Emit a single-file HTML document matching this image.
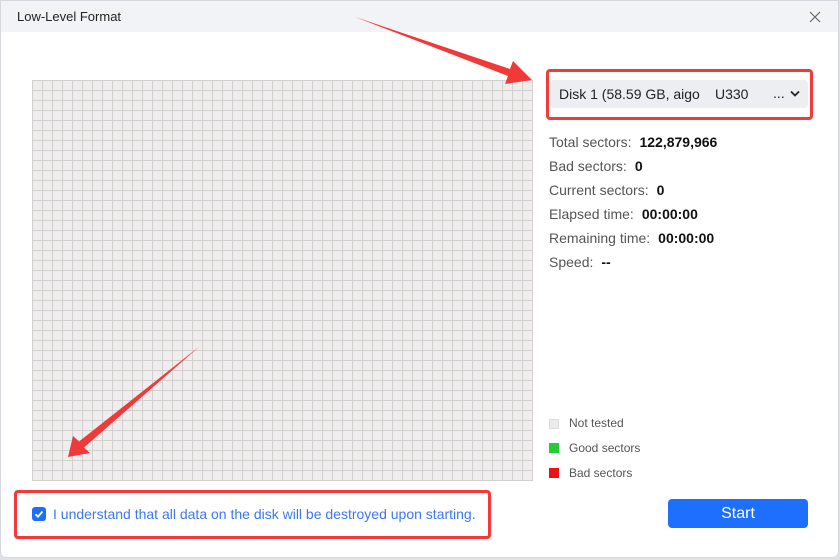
<!DOCTYPE html>
<html><head><meta charset="utf-8"><style>
*{margin:0;padding:0;box-sizing:border-box}
body{width:840px;height:560px;background:#dfe3e8;font-family:"Liberation Sans",sans-serif;position:relative;overflow:hidden}
.win{position:absolute;left:0;top:0;width:839px;height:558px;background:#fff;border-radius:0 0 6px 6px;overflow:hidden;box-shadow:inset 0 0 0 1px #d4d8de}
.title{position:absolute;left:1px;top:1px;width:837px;height:31px;background:#f1f3f6;}
.title span{position:absolute;left:16px;top:8px;font-size:13px;color:#222}
.grid{position:absolute;left:32px;top:80px;width:501px;height:401px;background-color:#efedee;
background-image:linear-gradient(to right,#d2cfcf 1px,transparent 1px),linear-gradient(to bottom,#d2cfcf 1px,transparent 1px);background-size:10px 10px}
.t{position:absolute;font-size:14px;color:#555;white-space:nowrap}
.t b{color:#111;margin-left:8px}
.lg{position:absolute;left:549px;width:10px;height:10px}
.lt{position:absolute;left:569px;font-size:12px;color:#555}
.box{position:absolute;border:3px solid #f23a3a;border-radius:4px}
</style></head><body>
<div class="win">
<div class="title"><span>Low-Level Format</span>
<svg style="position:absolute;left:807px;top:9px" width="14" height="14"><path d="M2 2L12 12M12 2L2 12" stroke="#666" stroke-width="1.2"/></svg></div>
<div class="grid"></div>
<div class="box" style="left:546px;top:69px;width:267px;height:51px"></div>
<div style="position:absolute;left:550px;top:80px;width:258px;height:28px;background:#eceef2;border-radius:4px;font-size:14px;color:#222">
<span style="position:absolute;left:9px;top:6px">Disk 1 (58.59 GB, aigo</span>
<span style="position:absolute;left:165px;top:6px">U330</span>
<span style="position:absolute;left:223px;top:5px">...</span>
<svg style="position:absolute;left:240px;top:10px" width="10" height="8"><path d="M1 1.5L5 5.5L9 1.5" stroke="#222" stroke-width="1.8" fill="none"/></svg></div>
<div class="t" style="left:549px;top:134px">Total sectors:<b>122,879,966</b></div>
<div class="t" style="left:549px;top:158px">Bad sectors:<b>0</b></div>
<div class="t" style="left:549px;top:182px">Current sectors:<b>0</b></div>
<div class="t" style="left:549px;top:206px">Elapsed time:<b>00:00:00</b></div>
<div class="t" style="left:549px;top:230px">Remaining time:<b>00:00:00</b></div>
<div class="t" style="left:549px;top:254px">Speed:<b>--</b></div>
<div class="lg" style="top:419px;background:#ececec;border:1px solid #ddd"></div><div class="lt" style="top:416px">Not tested</div>
<div class="lg" style="top:443px;background:#22cc33"></div><div class="lt" style="top:441px">Good sectors</div>
<div class="lg" style="top:468px;background:#ee1111"></div><div class="lt" style="top:466px">Bad sectors</div>
<div class="box" style="left:14px;top:490px;width:477px;height:49px"></div>
<div style="position:absolute;left:32px;top:507px;width:14px;height:14px;background:#1f6fff;border-radius:3px">
<svg width="14" height="14" style="position:absolute;left:0;top:0"><path d="M3.5 7.2L6 9.7L10.5 4.5" stroke="#fff" stroke-width="1.8" fill="none"/></svg></div>
<div style="position:absolute;left:53px;top:506px;font-size:14px;color:#3b78f5">I understand that all data on the disk will be destroyed upon starting.</div>
<div style="position:absolute;left:668px;top:499px;width:140px;height:29px;background:#1f6fff;border-radius:4px;color:#fff;font-size:16px;text-align:center;line-height:29px">Start</div>
<svg style="position:absolute;left:0;top:0" width="840" height="560">
<polygon points="355,17 510,69 513,61 532,80 505,84 508,76" fill="#f03a3a"/>
<polygon points="200,346 84,447.5 90,453 68,457 73,436 79,441.5" fill="#f03a3a"/>
</svg>
</div>
</body></html>
